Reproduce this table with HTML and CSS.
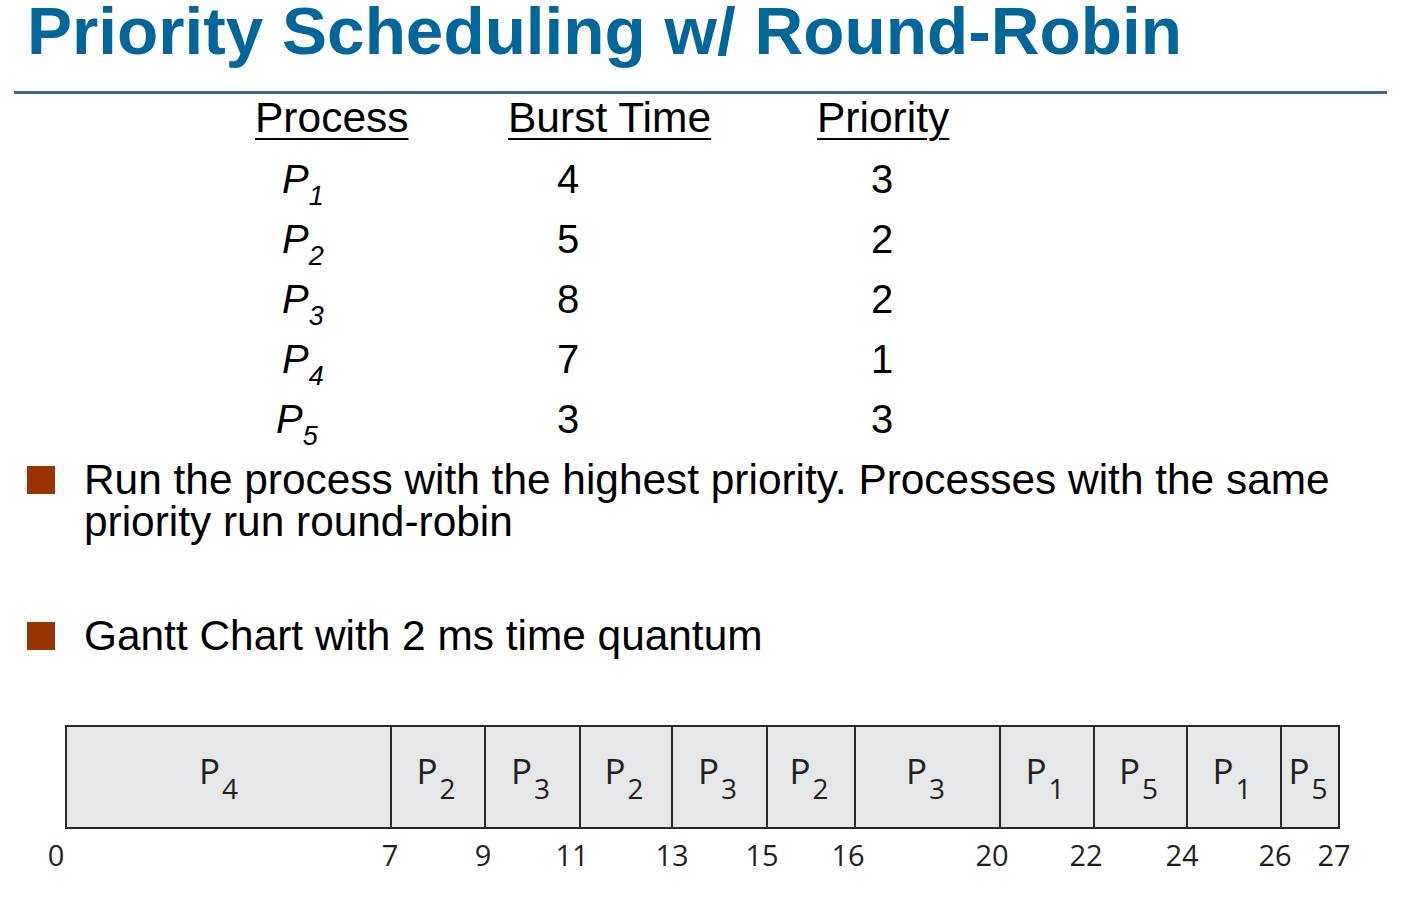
FILE: index.html
```html
<!DOCTYPE html>
<html lang="en">
<head>
<meta charset="utf-8">
<title>Priority Scheduling w/ Round-Robin</title>
<link rel="stylesheet" href="styles.css">
</head>
<body>
<div class="slide">
  <h1 class="title">Priority Scheduling w/ Round-Robin</h1>
  <div class="rule"></div>

  <div class="ptable">
    <div class="th">Process</div>
    <div class="th">Burst Time</div>
    <div class="th">Priority</div>

    <div class="td proc"><i>P<sub>1</sub></i></div>
    <div class="td burst">4</div>
    <div class="td prio">3</div>

    <div class="td proc"><i>P<sub>2</sub></i></div>
    <div class="td burst">5</div>
    <div class="td prio">2</div>

    <div class="td proc"><i>P<sub>3</sub></i></div>
    <div class="td burst">8</div>
    <div class="td prio">2</div>

    <div class="td proc"><i>P<sub>4</sub></i></div>
    <div class="td burst">7</div>
    <div class="td prio">1</div>

    <div class="td proc proc-shift"><i>P<sub>5</sub></i></div>
    <div class="td burst">3</div>
    <div class="td prio">3</div>
  </div>

  <ul class="bullets">
    <li class="bullet"><span class="mark"></span><span class="btext">Run the process with the highest priority. Processes with the same priority run round-robin</span></li>
    <li class="bullet bullet-2"><span class="mark"></span><span class="btext">Gantt Chart with 2 ms time quantum</span></li>
  </ul>

  <div class="gantt">
    <div class="bar">
      <div class="seg" style="width:323px"><span class="lab">P<span class="sb">4</span></span></div>
      <div class="seg" style="width:94px"><span class="lab">P<span class="sb">2</span></span></div>
      <div class="seg" style="width:95px"><span class="lab">P<span class="sb">3</span></span></div>
      <div class="seg" style="width:92px"><span class="lab">P<span class="sb">2</span></span></div>
      <div class="seg" style="width:95px"><span class="lab">P<span class="sb">3</span></span></div>
      <div class="seg" style="width:88px"><span class="lab">P<span class="sb">2</span></span></div>
      <div class="seg" style="width:145px"><span class="lab">P<span class="sb">3</span></span></div>
      <div class="seg" style="width:94px"><span class="lab">P<span class="sb">1</span></span></div>
      <div class="seg" style="width:93px"><span class="lab">P<span class="sb">5</span></span></div>
      <div class="seg" style="width:94px"><span class="lab">P<span class="sb">1</span></span></div>
      <div class="seg" style="width:58px"><span class="lab">P<span class="sb">5</span></span></div>
    </div>
    <div class="ticks">
      <div class="tk" style="width:16px"><span>0</span></div>
      <div class="tk" style="width:334px"><span>7</span></div>
      <div class="tk" style="width:93px"><span>9</span></div>
      <div class="tk" style="width:89px"><span>11</span></div>
      <div class="tk" style="width:100px"><span>13</span></div>
      <div class="tk" style="width:90px"><span>15</span></div>
      <div class="tk" style="width:86px"><span>16</span></div>
      <div class="tk" style="width:144px"><span>20</span></div>
      <div class="tk" style="width:94px"><span>22</span></div>
      <div class="tk" style="width:96px"><span>24</span></div>
      <div class="tk" style="width:93px"><span>26</span></div>
      <div class="tk" style="width:59px"><span>27</span></div>
    </div>
  </div>
</div>
</body>
</html>
```

FILE: styles.css
```css
html, body {
  margin: 0;
  padding: 0;
  background: #ffffff;
}

.slide {
  width: 1422px;
  height: 898px;
  font-family: "Liberation Sans", Arial, sans-serif;
  color: #000000;
  overflow: hidden;
}

.title {
  margin: 0;
  padding: 0 0 0 27px;
  font-size: 67.5px;
  line-height: 62px;
  font-weight: bold;
  color: #02669a;
  white-space: nowrap;
}

.rule {
  margin: 29px 0 0 14px;
  width: 1373px;
  height: 3px;
  background: #3a6898;
}

.ptable {
  display: grid;
  grid-template-columns: 253px 309px 200px;
  margin-left: 255px;
}

.th {
  font-size: 42.5px;
  line-height: 48px;
  text-decoration: underline;
  text-decoration-thickness: 2px;
  text-underline-offset: 6px;
  margin-bottom: 7px;
}

.td {
  font-size: 40px;
  line-height: 60px;
  height: 60px;
}

.td i {
  font-style: italic;
}

.td sub {
  font-size: 27px;
  vertical-align: -12px;
  line-height: 0;
}

.proc {
  padding-left: 27px;
}

.proc-shift {
  padding-left: 21px;
}

.burst {
  padding-left: 49px;
}

.prio {
  padding-left: 54px;
}

.bullets {
  list-style: none;
  margin: 10px 0 0 0;
  padding: 0 30px 0 27px;
}

.bullet {
  display: flex;
  align-items: flex-start;
  font-size: 42.4px;
  line-height: 42px;
}

.bullet-2 {
  margin-top: 72px;
}

.mark {
  flex: none;
  width: 28px;
  height: 28px;
  margin-top: 7px;
  margin-right: 29px;
  background: #993300;
}

.gantt {
  margin-top: 68px;
  font-family: "Open Sans", "Noto Sans", sans-serif;
  color: #231f20;
}

.bar {
  display: flex;
  margin-left: 65px;
  width: 1271px;
  height: 100px;
  border: 2px solid #2a2728;
  background: #e6e7e8;
}

.seg {
  flex: none;
  box-sizing: border-box;
  display: flex;
  justify-content: center;
  align-items: flex-start;
  padding-top: 26px;
  padding-right: 4px;
  border-left: 2px solid #2a2728;
}

.seg:first-child {
  border-left: none;
  padding-right: 20px;
}

.lab {
  font-size: 35px;
  line-height: 35px;
  white-space: nowrap;
}

.sb {
  font-size: 28px;
  vertical-align: -15px;
  margin-left: 2px;
  line-height: 0;
}

.ticks {
  display: flex;
  margin-top: 11px;
  margin-left: 40px;
}

.tk {
  flex: none;
  display: flex;
  justify-content: flex-end;
  font-size: 29px;
  line-height: 30px;
}

.tk span {
  width: 0;
  display: flex;
  justify-content: center;
  white-space: nowrap;
}
```
